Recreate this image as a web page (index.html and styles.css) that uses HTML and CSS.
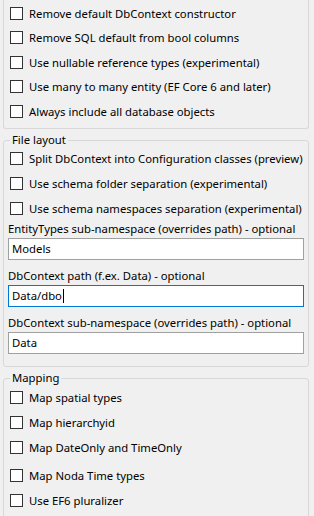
FILE: index.html
```html
<!DOCTYPE html>
<html lang="en">
<head>
  <meta charset="UTF-8">
  <meta name="viewport" content="width=device-width, initial-scale=1.0">
  <title>Reverse Engineer Options</title>
  <link rel="stylesheet" href="styles.css">
</head>
<body>
  <div class="panel">
    <div class="group group-open">
      <label class="check"><input type="checkbox"><span>Remove default DbContext constructor</span></label>
      <label class="check"><input type="checkbox"><span>Remove SQL default from bool columns</span></label>
      <label class="check"><input type="checkbox"><span>Use nullable reference types (experimental)</span></label>
      <label class="check"><input type="checkbox"><span>Use many to many entity (EF Core 6 and later)</span></label>
      <label class="check"><input type="checkbox"><span>Always include all database objects</span></label>
    </div>

    <fieldset class="group">
      <legend>File layout</legend>
      <label class="check"><input type="checkbox"><span>Split DbContext into Configuration classes (preview)</span></label>
      <label class="check"><input type="checkbox"><span>Use schema folder separation (experimental)</span></label>
      <label class="check"><input type="checkbox"><span>Use schema namespaces separation (experimental)</span></label>

      <div class="field-label">EntityTypes sub-namespace (overrides path) - optional</div>
      <div class="textbox">Models</div>

      <div class="field-label">DbContext path (f.ex. Data) - optional</div>
      <div class="textbox focused">Data/dbo<span class="caret"></span></div>

      <div class="field-label">DbContext sub-namespace (overrides path) - optional</div>
      <div class="textbox">Data</div>
    </fieldset>

    <fieldset class="group mapping">
      <legend>Mapping</legend>
      <label class="check"><input type="checkbox"><span>Map spatial types</span></label>
      <label class="check"><input type="checkbox"><span>Map hierarchyid</span></label>
      <label class="check"><input type="checkbox"><span>Map DateOnly and TimeOnly</span></label>
      <label class="check spaced"><input type="checkbox"><span>Map Noda Time types</span></label>
      <label class="check"><input type="checkbox"><span>Use EF6 pluralizer</span></label>
    </fieldset>
  </div>
</body>
</html>
```

FILE: styles.css
```css
body {
  margin: 0;
  padding: 0;
  background-color: #f0f0f0;
  color: #000;
  font-family: "Noto Sans", sans-serif;
  font-size: 11.3px;
  overflow: hidden;
}
.panel {
  display: flex;
  flex-direction: column;
  width: 314px;
}
.group {
  margin: 5px 0 0 3px;
  width: 306px;
  box-sizing: border-box;
  border: 1px solid #d8d8d8;
  border-radius: 3px;
  padding: 0 4px 12px;
  min-width: 0;
}
.group legend {
  margin-left: 2px;
  padding: 0 2px;
  line-height: 12px;
}
.group-open {
  margin-top: 0;
  border-top: none;
  border-radius: 0 0 3px 3px;
  padding: 1px 4px 4.5px;
}
.check {
  display: flex;
  align-items: center;
  height: 24.5px;
  padding-left: 2px;
  white-space: nowrap;
}
fieldset .check {
  height: 25px;
}
.mapping {
  padding-top: 1px;
}
.check.spaced {
  margin-top: 3px;
}
.check input {
  appearance: none;
  -webkit-appearance: none;
  width: 13px;
  height: 13px;
  margin: 0 6px 0 0;
  border: 1px solid #333;
  background: #fff;
  flex: none;
}
.field-label {
  line-height: 16px;
  white-space: nowrap;
}
.textbox {
  height: 22px;
  box-sizing: border-box;
  margin: 1px 0 8px;
  padding: 0 3px;
  border: 1px solid #a0a0a0;
  background: #fff;
  line-height: 20px;
  white-space: nowrap;
}
.textbox:last-child {
  margin-bottom: 0;
}
.textbox.focused {
  border-color: #0078d7;
}
.caret {
  display: inline-block;
  width: 1px;
  height: 14px;
  margin-left: 1px;
  vertical-align: -3px;
  background: #000;
}
```
